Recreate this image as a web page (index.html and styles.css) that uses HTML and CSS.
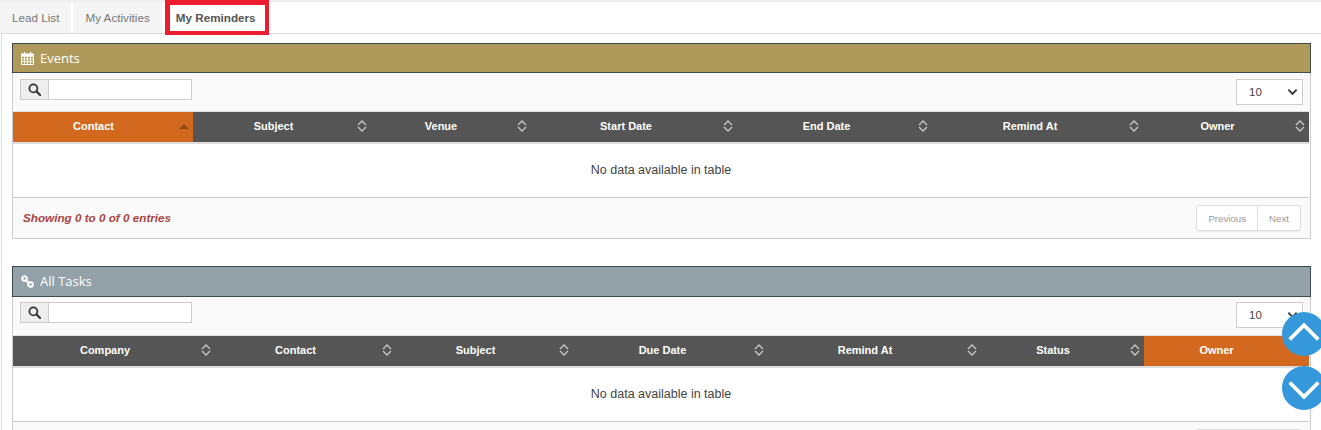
FILE: index.html
```html
<!DOCTYPE html>
<html lang="en">
<head>
<meta charset="utf-8">
<title>My Reminders</title>
<link rel="stylesheet" href="styles.css">
</head>
<body>
<div class="topline"></div>
<nav class="tabs">
  <a class="tab">Lead List</a>
  <a class="tab">My Activities</a>
  <a class="tab tab-active">My Reminders</a>
</nav>
<main class="content">
  <section class="panel">
    <header class="panel-head head-gold">
      <svg class="head-icon" viewBox="0 0 14 14"><path fill="#fff" fill-rule="evenodd" d="M3 0h1.500v1.500h5V0H11v1.500h2.200c.4 0 .8.4.8.8v10.900c0 .4-.4.8-.8.8H.8c-.4 0-.8-.4-.8-.8V2.300c0-.4.4-.8.8-.8H3zM1 5v2h2.300V5zm3.200 0v2h2.300V5zm3.300 0v2h2.300V5zm3.200 0v2H13V5zM1 8v2h2.300V8zm3.200 0v2h2.300V8zm3.300 0v2h2.300V8zm3.200 0v2H13V8zM1 11v2h2.300v-2zm3.200 0v2h2.300v-2zm3.300 0v2h2.300v-2zm3.200 0v2H13v-2z"/></svg>
      <span>Events</span>
    </header>
    <div class="toolbar">
      <div class="search">
        <span class="search-addon"><svg viewBox="0 0 14 14"><circle cx="5.800" cy="5.800" r="4.300" fill="none" stroke="#333" stroke-width="1.900"/><path d="M9 9l4 4" stroke="#333" stroke-width="2.300" stroke-linecap="round"/></svg></span>
        <span class="search-input"></span>
      </div>
      <div class="select"><span>10</span><svg viewBox="0 0 12 8"><path d="M1.500 1.500L6 6l4.500-4.500" fill="none" stroke="#333" stroke-width="2"/></svg></div>
    </div>
    <table class="data events">
      <colgroup><col class="e1"><col class="e2"><col class="e3"><col class="e4"><col class="e5"><col class="e6"><col class="e7"></colgroup>
      <thead><tr>
        <th class="sorted">Contact<svg class="sort sort-asc" viewBox="0 0 12 14"><path d="M1 10l5-5 5 5z" fill="#8a4a1c"/></svg></th>
        <th>Subject<svg class="sort" viewBox="0 0 12 14"><path d="M2 6l4-4 4 4M2 8l4 4 4-4" fill="none" stroke="#c8c8c8" stroke-width="1.300"/></svg></th>
        <th>Venue<svg class="sort" viewBox="0 0 12 14"><path d="M2 6l4-4 4 4M2 8l4 4 4-4" fill="none" stroke="#c8c8c8" stroke-width="1.300"/></svg></th>
        <th>Start Date<svg class="sort" viewBox="0 0 12 14"><path d="M2 6l4-4 4 4M2 8l4 4 4-4" fill="none" stroke="#c8c8c8" stroke-width="1.300"/></svg></th>
        <th>End Date<svg class="sort" viewBox="0 0 12 14"><path d="M2 6l4-4 4 4M2 8l4 4 4-4" fill="none" stroke="#c8c8c8" stroke-width="1.300"/></svg></th>
        <th>Remind At<svg class="sort" viewBox="0 0 12 14"><path d="M2 6l4-4 4 4M2 8l4 4 4-4" fill="none" stroke="#c8c8c8" stroke-width="1.300"/></svg></th>
        <th>Owner<svg class="sort" viewBox="0 0 12 14"><path d="M2 6l4-4 4 4M2 8l4 4 4-4" fill="none" stroke="#c8c8c8" stroke-width="1.300"/></svg></th>
      </tr></thead>
      <tbody><tr><td colspan="7">No data available in table</td></tr></tbody>
    </table>
    <footer class="panel-foot">
      <em class="info">Showing 0 to 0 of 0 entries</em>
      <div class="pager"><a>Previous</a><a>Next</a></div>
    </footer>
  </section>
  <section class="panel">
    <header class="panel-head head-slate">
      <svg class="head-icon" viewBox="0 0 14 14"><g fill="none" stroke="#fff" stroke-width="2.200"><circle cx="3.800" cy="3.800" r="2.500"/><circle cx="10.200" cy="10.200" r="2.500"/><path d="M5 5l4 4"/></g></svg>
      <span>All Tasks</span>
    </header>
    <div class="toolbar">
      <div class="search">
        <span class="search-addon"><svg viewBox="0 0 14 14"><circle cx="5.800" cy="5.800" r="4.300" fill="none" stroke="#333" stroke-width="1.900"/><path d="M9 9l4 4" stroke="#333" stroke-width="2.300" stroke-linecap="round"/></svg></span>
        <span class="search-input"></span>
      </div>
      <div class="select"><span>10</span><svg viewBox="0 0 12 8"><path d="M1.500 1.500L6 6l4.500-4.500" fill="none" stroke="#333" stroke-width="2"/></svg></div>
    </div>
    <table class="data tasks">
      <colgroup><col class="t1"><col class="t2"><col class="t3"><col class="t4"><col class="t5"><col class="t6"><col class="t7"></colgroup>
      <thead><tr>
        <th>Company<svg class="sort" viewBox="0 0 12 14"><path d="M2 6l4-4 4 4M2 8l4 4 4-4" fill="none" stroke="#c8c8c8" stroke-width="1.300"/></svg></th>
        <th>Contact<svg class="sort" viewBox="0 0 12 14"><path d="M2 6l4-4 4 4M2 8l4 4 4-4" fill="none" stroke="#c8c8c8" stroke-width="1.300"/></svg></th>
        <th>Subject<svg class="sort" viewBox="0 0 12 14"><path d="M2 6l4-4 4 4M2 8l4 4 4-4" fill="none" stroke="#c8c8c8" stroke-width="1.300"/></svg></th>
        <th>Due Date<svg class="sort" viewBox="0 0 12 14"><path d="M2 6l4-4 4 4M2 8l4 4 4-4" fill="none" stroke="#c8c8c8" stroke-width="1.300"/></svg></th>
        <th>Remind At<svg class="sort" viewBox="0 0 12 14"><path d="M2 6l4-4 4 4M2 8l4 4 4-4" fill="none" stroke="#c8c8c8" stroke-width="1.300"/></svg></th>
        <th>Status<svg class="sort" viewBox="0 0 12 14"><path d="M2 6l4-4 4 4M2 8l4 4 4-4" fill="none" stroke="#c8c8c8" stroke-width="1.300"/></svg></th>
        <th class="sorted">Owner</th>
      </tr></thead>
      <tbody><tr><td colspan="7">No data available in table</td></tr></tbody>
    </table>
    <footer class="panel-foot">
      <em class="info">Showing 0 to 0 of 0 entries</em>
      <div class="pager"><a>Previous</a><a>Next</a></div>
    </footer>
  </section>
</main>
<a class="float float-up"><svg viewBox="0 0 40 40"><path d="M7 25L20 12l13 13" fill="none" stroke="#fff" stroke-width="3.500"/></svg></a>
<a class="float float-down"><svg viewBox="0 0 40 40"><path d="M7 15l13 13 13-13" fill="none" stroke="#fff" stroke-width="3.500"/></svg></a>
</body>
</html>
```
FILE: styles.css
```css
* { box-sizing: border-box; }
html, body { margin: 0; height: 430px; overflow: hidden; background: #fff; }
body { font-family: "Liberation Sans", Arial, sans-serif; font-size: 12px; color: #444; }
.topline { height: 2px; background: #eeeeee; }
.tabs { display: flex; align-items: flex-start; height: 32px; border-bottom: 1px solid #dddddd; }
.tab { display: flex; align-items: center; height: 31px; padding: 0 12px; background: #f5f5f5; color: #777; font-size: 11.7px; }
.tab:nth-child(1) { margin-right: 2px; }
.tab:nth-child(2) { margin-right: 3px; }
.tab-active { position: relative; height: 35px; margin-top: -2px; padding: 0 9px 1px 6px; background: #fff; color: #555; font-weight: 700; border: 4px solid #ed1c2e; border-top-width: 5px; border-left-width: 5px; }
.content { margin-left: 1px; border-left: 1px solid #ddd; padding: 9px 9px 0 10px; }
.panel { width: 1299px; margin-bottom: 27px; border: 1px solid #cccccc; border-top: 0; background: #fafafa; }
.panel-head { display: flex; align-items: center; gap: 6px; margin: 0 -1px; padding: 0 8px; border: 1px solid #3f4a4f; color: #fff; font-family: "Open Sans", sans-serif; font-size: 13px; }
.head-gold { height: 30px; background: #b09a5b; }
.head-slate { height: 31px; padding-bottom: 1px; background: #93a1a8; }
.head-icon { width: 13px; height: 13px; flex: none; }
.toolbar { display: flex; justify-content: space-between; align-items: flex-start; height: 38px; padding: 6px 7px 0 7px; }
.head-slate + .toolbar { padding-top: 5px; }
.search { display: flex; width: 172px; height: 21px; border: 1px solid #cccccc; background: #fff; }
.search-addon { display: flex; align-items: center; justify-content: center; width: 28px; background: #eeeeee; border-right: 1px solid #cccccc; }
.search-addon svg { width: 13px; height: 13px; }
.search-input { flex: 1; }
.select { display: flex; justify-content: space-between; align-items: center; width: 67px; height: 26px; padding: 0 4px 0 12px; border: 1px solid #cccccc; background: #fff; font-size: 11.5px; color: #444; }
.select svg { width: 11px; height: 8px; }
.data { width: 1296px; table-layout: fixed; border-collapse: collapse; background: #fff; }
.data th { position: relative; height: 31px; padding: 0 20px 2px 0; background: #555555; color: #fff; font-size: 11px; font-weight: 700; text-align: center; border-top: 1px solid #e0e0e0; border-bottom: 2px solid #dddddd; }
.data th.sorted { background: #d2691e; }
.events th:nth-child(1) { padding-left: 1px; }
.events th:nth-child(2) { padding-left: 1px; }
.events th:nth-child(3) { padding-right: 24px; }
.tasks th:nth-child(2) { padding: 0 26px 2px 2px; }
.tasks th:nth-child(3) { padding-right: 22px; }
.tasks th:nth-child(5) { padding-right: 23px; }
.tasks th:nth-child(6) { padding-right: 21px; }
.sort { position: absolute; right: 5px; top: 7px; width: 12px; height: 14px; }
.sort-asc { right: 3px; }
.events th:nth-child(6) .sort { right: 6px; }
.events th:nth-child(7) .sort { right: 3px; }
.tasks th:nth-child(6) .sort { right: 3px; }
.data td { height: 55px; text-align: center; background: #fff; color: #444; font-size: 12.5px; border-bottom: 1px solid #cccccc; }
.e1 { width: 180px; } .e2 { width: 180px; } .e3 { width: 160px; } .e4 { width: 206px; } .e5 { width: 195px; } .e6 { width: 212px; } .e7 { width: 163px; }
.t1 { width: 204px; } .t2 { width: 181px; } .t3 { width: 177px; } .t4 { width: 195px; } .t5 { width: 213px; } .t6 { width: 161px; } .t7 { width: 165px; }
.panel-foot { display: flex; justify-content: space-between; align-items: center; height: 40px; padding: 0 9px 0 10px; }
.info { margin-bottom: 2px; color: #a94442; font-weight: 700; font-size: 11.7px; }
.pager { display: flex; height: 26px; border: 1px solid #dddddd; background: #fff; border-radius: 2px; box-shadow: 0 1px 0 #eeeeee; color: #999; font-size: 9.7px; }
.pager a { display: flex; align-items: center; padding: 0 11px; }
.pager a + a { border-left: 1px solid #dddddd; }
.float { position: fixed; left: 1282px; width: 44px; height: 44px; border-radius: 50%; background: #3498db; }
.float svg { display: block; width: 44px; height: 44px; }
.float-up { top: 312px; }
.float-down { top: 366px; }
```
